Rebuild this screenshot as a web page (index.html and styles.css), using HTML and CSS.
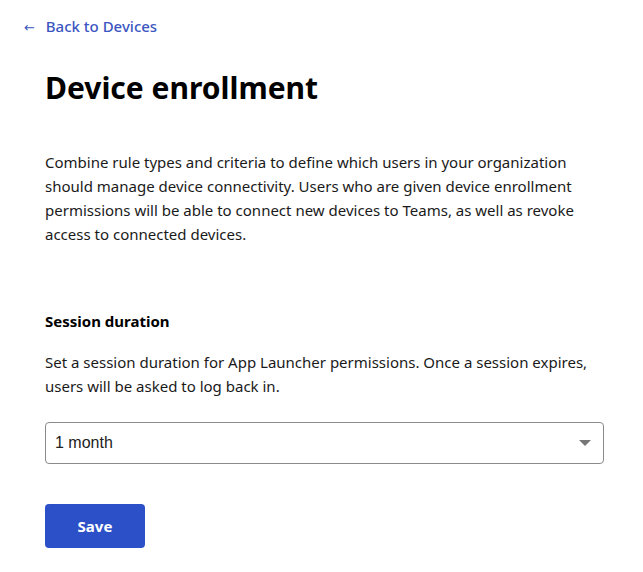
FILE: index.html
```html
<!DOCTYPE html>
<html lang="en">
<head>
  <meta charset="UTF-8" />
  <meta name="viewport" content="width=device-width, initial-scale=1.0" />
  <title>Device enrollment</title>
  <link rel="stylesheet" href="styles.css">
</head>
<body>
  <a class="back-link" href="#"><span class="arrow">&larr;</span> Back to Devices</a>
  <div class="container">
    <h1>Device enrollment</h1>
    <p class="intro">
      Combine rule types and criteria to define which users in your organization
      should manage device connectivity. Users who are given device enrollment
      permissions will be able to connect new devices to Teams, as well as revoke
      access to connected devices.
    </p>

    <h2>Session duration</h2>
    <p class="hint">
      Set a session duration for App Launcher permissions. Once a session expires,
      users will be asked to log back in.
    </p>

    <div class="select-box">
      <span class="select-value">1 month</span>
      <span class="caret"></span>
    </div>

    <button class="save">Save</button>
  </div>
</body>
</html>
```

FILE: styles.css
```css
body {
  margin: 0;
  background-color: white;
  font-family: "Noto Sans", sans-serif;
  color: #1a1a1a;
}

.back-link {
  display: inline-block;
  margin: 16px 0 0 24px;
  color: #3b56c2;
  text-decoration: none;
  font-size: 15px;
  font-weight: 500;
}

.back-link .arrow {
  font-family: "DejaVu Sans", sans-serif;
  font-size: 13px;
  margin-right: 7px;
}

.container {
  padding: 0 39px 0 45px;
}

h1 {
  margin: 30px 0 0;
  font-size: 30px;
  font-weight: 700;
  color: black;
}

.intro {
  margin: 42px 0 0;
  font-size: 15px;
  line-height: 24px;
}

h2 {
  margin: 65px 0 0;
  font-size: 15px;
  font-weight: 700;
  color: black;
}

.hint {
  margin: 19px 0 0;
  font-size: 15px;
  line-height: 24px;
}

.select-box {
  margin-top: 24px;
  height: 40px;
  border: 1px solid #8a8a8a;
  border-radius: 4px;
  display: flex;
  align-items: center;
  justify-content: space-between;
  padding: 0 12px 0 9px;
  font-family: "Liberation Sans", Arial, sans-serif;
  font-size: 16px;
  color: #222;
}

.caret {
  width: 0;
  height: 0;
  border-left: 6px solid transparent;
  border-right: 6px solid transparent;
  border-top: 6px solid #777;
}

.save {
  margin-top: 40px;
  width: 100px;
  height: 44px;
  border: none;
  border-radius: 4px;
  background-color: #2b50c8;
  color: white;
  font-family: "Noto Sans", sans-serif;
  font-size: 15px;
  font-weight: 700;
  cursor: pointer;
}
```
